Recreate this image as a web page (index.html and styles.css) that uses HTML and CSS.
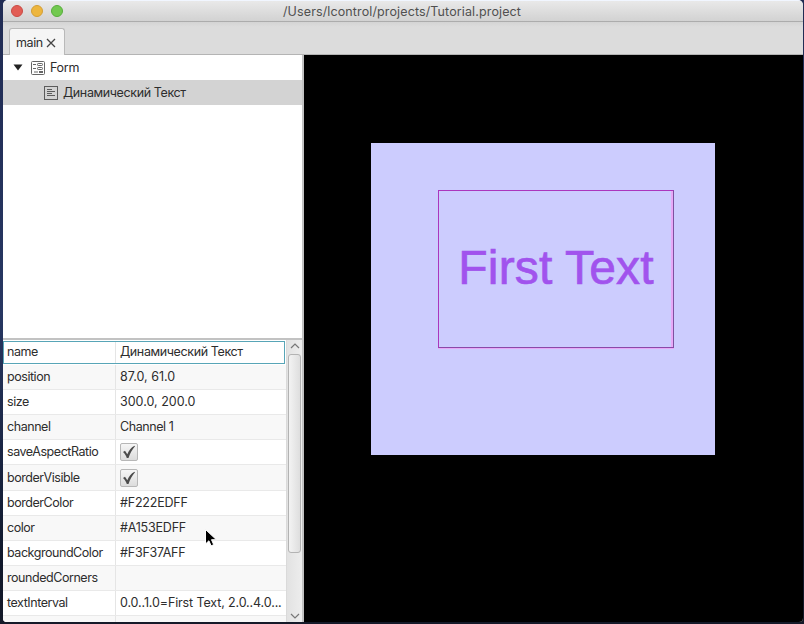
FILE: index.html
```html
<!DOCTYPE html>
<html lang="ru">
<head>
<meta charset="utf-8">
<title>Tutorial.project</title>
<link rel="stylesheet" href="styles.css">
</head>
<body>
<div class="window">
  <header class="titlebar">
    <div class="lights"><i class="light red"></i><i class="light yellow"></i><i class="light green"></i></div>
    <span class="title">/Users/lcontrol/projects/Tutorial.project</span>
  </header>
  <nav class="tabs">
    <div class="tab"><span class="tab-name">main</span>
      <svg class="close" width="10" height="10" viewBox="0 0 10 10"><path d="M1 1l8 8M9 1l-8 8" fill="none" stroke="#444" stroke-width="1.3"/></svg>
    </div>
  </nav>
  <main class="content">
    <aside class="sidebar">
      <section class="tree">
        <div class="node">
          <svg class="arrow" width="10" height="7" viewBox="0 0 10 7"><path d="M.5 .5h9L5 6.5z" fill="#222"/></svg>
          <svg width="14" height="14" viewBox="0 0 14 14" fill="none" stroke="#666"><rect x=".5" y=".5" width="13" height="13" rx="1"/><path d="M2 3.500h3M2 7.500h3M3 11h4"/><rect x="6.500" y="2.500" width="5" height="2" rx=".7"/><rect x="6.500" y="6.500" width="5" height="2" rx=".7"/><path d="M8 11h4" stroke-width="2"/></svg>
          <span class="node-form">Form</span>
        </div>
        <div class="node selected">
          <svg width="14" height="14" viewBox="0 0 14 14" fill="none" stroke="#5c5c5c"><rect x=".5" y=".5" width="13" height="13"/><path d="M3 3.500h5M3 5.500h8M3 7.500h5M3 9.500h8" stroke-width="1.200"/></svg>
          <span class="node-text">Динамический Текст</span>
        </div>
      </section>
      <section class="properties">
        <div class="table">
          <div class="row focused"><span class="key">name</span><span class="value cyrillic">Динамический Текст</span></div>
          <div class="row"><span class="key">position</span><span class="value">87.0, 61.0</span></div>
          <div class="row"><span class="key">size</span><span class="value">300.0, 200.0</span></div>
          <div class="row"><span class="key">channel</span><span class="value tight">Channel 1</span></div>
          <div class="row"><span class="key">saveAspectRatio</span><span class="value"><i class="check"><svg width="14" height="14" viewBox="0 0 14 14"><path d="M1 7L3 5.800 5.300 9.300C7 5.500 9 2.500 12.500 .8L13 1.300C10 4.700 8 8.500 6.500 13H4.800C4 10.500 2.800 8.500 1 7z" fill="#4b4b4b"/></svg></i></span></div>
          <div class="row tall"><span class="key">borderVisible</span><span class="value"><i class="check"><svg width="14" height="14" viewBox="0 0 14 14"><path d="M1 7L3 5.800 5.300 9.300C7 5.500 9 2.500 12.500 .8L13 1.300C10 4.700 8 8.500 6.500 13H4.800C4 10.500 2.800 8.500 1 7z" fill="#4b4b4b"/></svg></i></span></div>
          <div class="row"><span class="key">borderColor</span><span class="value hex">#F222EDFF</span></div>
          <div class="row"><span class="key">color</span><span class="value hex">#A153EDFF</span></div>
          <div class="row"><span class="key">backgroundColor</span><span class="value hex">#F3F37AFF</span></div>
          <div class="row"><span class="key">roundedCorners</span><span class="value"></span></div>
          <div class="row"><span class="key">textInterval</span><span class="value interval">0.0..1.0=First Text, 2.0..4.0...</span></div>
          <div class="row"><span class="key"></span><span class="value"></span></div>
        </div>
        <div class="scrollbar">
          <svg width="10" height="6" viewBox="0 0 10 6"><path d="M1 5l4-4 4 4" fill="none" stroke="#777" stroke-width="1.2"/></svg>
          <div class="thumb"></div>
          <svg class="down" width="10" height="6" viewBox="0 0 10 6"><path d="M1 1l4 4 4-4" fill="none" stroke="#777" stroke-width="1.2"/></svg>
        </div>
      </section>
    </aside>
    <section class="stage">
      <div class="form"><div class="label"><span>First Text</span></div></div>
    </section>
  </main>
</div>
<svg class="cursor" width="14" height="20" viewBox="0 0 14 20"><path d="M1.500 1.500v14.500l3.400-3.200 2.200 5 2.600-1.100-2.200-5h4.900z" fill="#000" stroke="#fff" stroke-width="1"/></svg>
</body>
</html>
```
FILE: styles.css
```css
* { box-sizing: border-box; }
body {
  margin: 0;
  width: 804px;
  height: 624px;
  overflow: hidden;
  background: linear-gradient(#202b53, #273762 50%, #10182b 90%, #151a29);
  font: 12.5px/16px Inter, "Liberation Sans", sans-serif;
  color: #2d2d2d;
}
svg { display: block; flex: none; }
.window {
  width: 800px;
  height: 622px;
  margin-left: 3px;
  display: flex;
  flex-direction: column;
  overflow: hidden;
  border-radius: 5px 5px 4px 4px;
  background: #dcdcdc;
}
.titlebar {
  flex: none;
  height: 22px;
  display: flex;
  align-items: center;
  background: linear-gradient(#e9e9e9, #d2d2d2);
  border-top: 1px solid #f1f6ff;
  border-bottom: 1px solid #acacac;
}
.lights { display: flex; gap: 8px; padding-left: 8px; width: 280px; }
.light { width: 12px; height: 12px; border-radius: 50%; border: 1px solid; }
.red { background: #e25d55; border-color: #c94b45; }
.yellow { background: #edb63e; border-color: #d39e35; }
.green { background: #72c950; border-color: #57ad3c; }
.title { color: #505050; font-size: 12.5px; letter-spacing: .12px; white-space: nowrap; padding-top: 2px; }
.tabs {
  flex: none;
  height: 33px;
  padding: 6px 6px 0;
  border-bottom: 1px solid #b4b4b4;
  background: linear-gradient(#d4d4d4, #dcdcdc 5px);
}
.tab {
  width: 56px;
  height: 27px;
  display: flex;
  align-items: center;
  padding: 2px 0 0 6px;
  background: #f5f5f5;
  border: 1px solid #b9b9b9;
  border-bottom: 0;
  border-radius: 3px 3px 0 0;
}
.tab-name { width: 30px; letter-spacing: -.4px; }
.content { flex: 1; display: flex; min-height: 0; }
.sidebar { width: 301px; display: flex; flex-direction: column; border-right: 2px solid #c2c2c2; background: #fff; }
.tree { flex: none; height: 285px; border-bottom: 2px solid #c2c2c2; }
.node { height: 25px; display: flex; align-items: center; padding-left: 10px; }
.arrow { margin-right: 8px; }
.node span { margin-left: 5px; white-space: nowrap; }
.node-form { letter-spacing: -.3px; }
.node-text, .cyrillic { letter-spacing: -.38px; }
.selected { padding-left: 41px; background: #d3d3d3; }
.properties { flex: 1; min-height: 0; display: flex; }
.table { width: 283px; overflow: hidden; }
.row { height: 25px; display: flex; border-bottom: 1px solid #e9e9e9; }
.row:nth-child(even) { background: #f8f8f8; }
.row.tall { height: 26px; }
.key, .value { display: flex; align-items: center; white-space: nowrap; padding-left: 4px; }
.key { width: 113px; border-right: 1px solid #e5e5e5; letter-spacing: -.45px; }
.row.focused { margin: 1px 0; width: 282px; height: 23px; border: 1px solid #58a5b7; }
.focused .key { width: 112px; padding-left: 3px; }
.focused .key, .focused .value { padding-bottom: 2px; }
.tight { letter-spacing: -.42px; }
.hex { letter-spacing: -.2px; }
.interval { letter-spacing: -.13px; }
.check {
  width: 18px;
  height: 18px;
  display: flex;
  align-items: center;
  justify-content: center;
  background: linear-gradient(#f6f6f6, #dcdcdc);
  border: 1px solid #b7b7b7;
  border-radius: 2px;
}
.scrollbar {
  width: 16px;
  display: flex;
  flex-direction: column;
  align-items: center;
  padding-top: 3px;
  border-left: 1px solid #dadada;
  background: linear-gradient(90deg, #e2e2e2, #ededed);
}
.thumb {
  width: 13px;
  height: 199px;
  margin-top: 5px;
  border: 1px solid #b3b3b3;
  border-radius: 3px;
  background: linear-gradient(90deg, #f3f3f3, #dedede);
}
.down { margin: auto 0 3px; }
.stage { flex: 1; background: #000; padding: 88px 0 0 67px; }
.form { width: 344px; height: 312px; padding: 47px 0 0 67px; background: #ccccfe; }
.label {
  width: 236px;
  height: 158px;
  display: flex;
  align-items: center;
  justify-content: center;
  border: 1px solid #ab36bd;
  border-right-color: #7d529f;
  border-bottom-color: #8b49a8;
  box-shadow: inset -2px 0 #e7a8f7, 0 1px #e7a8f7;
  color: #a153ed;
  font: 48px/54px "Liberation Sans", Arial, sans-serif;
  letter-spacing: .15px;
  -webkit-text-stroke: .7px #a153ed;
  white-space: nowrap;
}
.label span { margin-top: -2px; }
.cursor { position: absolute; left: 204px; top: 528px; }
```
